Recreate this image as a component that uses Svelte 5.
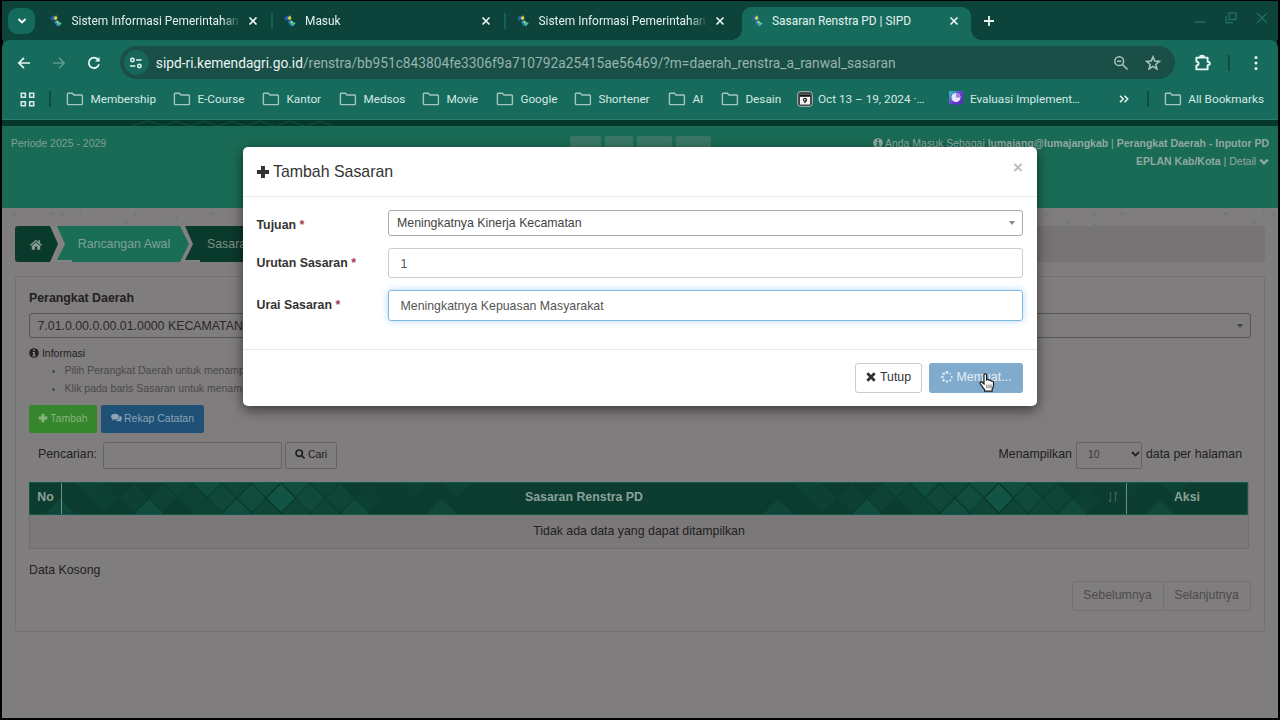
<script>
  // browser chrome
  const tabs = [
    { title: 'Sistem Informasi Pemerintahan', sep: true },
    { title: 'Masuk', sep: true },
    { title: 'Sistem Informasi Pemerintahan', sep: false },
    { title: 'Sasaran Renstra PD | SIPD', active: true }
  ]
  const host = 'sipd-ri.kemendagri.go.id'
  const path = '/renstra/bb951c843804fe3306f9a710792a25415ae56469/?m=daerah_renstra_a_ranwal_sasaran'
  const bookmarks = [
    { name: 'Membership', width: 107 },
    { name: 'E-Course', width: 89 },
    { name: 'Kantor', width: 77 },
    { name: 'Medsos', width: 83 },
    { name: 'Movie', width: 74 },
    { name: 'Google', width: 78 },
    { name: 'Shortener', width: 94 },
    { name: 'AI', width: 53 },
    { name: 'Desain', width: 76 }
  ]

  // diamonds of the table header texture: [x, y, opacity]
  const cluster = [
    [-147, 0, 0.2], [-118, 0, 0.25], [-132, 15, 0.7], [-103, -15, 0.35], [-88, 0, 0.3],
    [-74, -15, 0.7], [-74, 15, 0.25], [-59, 0, 0.5], [-44, 15, 0.75], [-44, -15, 0.4],
    [-29, 0, 0.7], [-15, 15, 0.4], [-15, -15, 0.75], [0, 0, 1], [15, -15, 0.75], [15, 15, 0.35],
    [29, 0, 0.6], [44, 15, 0.35], [44, -15, 0.35], [59, 0, 0.35], [74, 15, 0.6], [88, 0, 0.15],
    [-191, -15, 0.3], [-177, 0, 0.2], [-221, 15, 0.45], [132, -15, 0.15], [161, 15, 0.5], [176, -15, 0.3]
  ]
  const diamonds = [251, 969].flatMap((cx) => cluster.map(([x, y, o]) => [cx + x, 15 + y, o]))

  // specks of the page background that show under the header
  const specks = [[11, 5], [49, 4], [58, 5], [77, 4], [132, 5], [173, 9], [209, 4], [123, 13], [1044, 5], [1091, 5], [1119, 4], [1222, 4], [1260, 4], [1270, 5], [1064, 14], [1091, 15], [1250, 13]]

  let tujuan = 'Meningkatnya Kinerja Kecamatan'
  let urutan = '1'
  let urai = 'Meningkatnya Kepuasan Masyarakat'
</script>

{#snippet favicon()}
  <svg class="favicon" width="14" height="14" viewBox="0 0 14 14">
    <path d="M1 4.5 4 1.5 6.5 3 3.5 7z" fill="#1f62b0" />
    <path d="M4.5 4 7.2 1.2 8.6 4.8 6 6.2z" fill="#d8cf3e" />
    <path d="M5 8 8 5.5 10.2 8.5 8 12.5z" fill="#2e80c0" />
    <path d="M8.2 7.5 12.8 9 9.5 12.4z" fill="#47c99a" />
    <path d="M7 7.6 9.8 7.2 8.6 9.6z" fill="#e4dd55" />
  </svg>
{/snippet}

{#snippet cross()}
  <svg width="10" height="10" viewBox="0 0 10 10" stroke="currentColor" stroke-width="1.6"><path d="M1.5 1.5l7 7M8.5 1.5l-7 7" /></svg>
{/snippet}

{#snippet folder()}
  <svg width="18" height="14" viewBox="0 0 18 14" fill="none" stroke="#a5c6be" stroke-width="1.4"><path d="M2.2 1.2H6.4L8 3h7.6q.8 0 .8.8v8q0 .8-.8.8H2.2q-.8 0-.8-.8V2q0-.8.8-.8z" /></svg>
{/snippet}

{#snippet plus(size)}
  <svg width={size} height={size} viewBox="0 0 12 12" fill="currentColor"><path d="M4.3.8h3.4v3.5h3.5v3.4H7.7v3.5H4.3V7.7H.8V4.3h3.5z" /></svg>
{/snippet}

{#snippet info()}
  <svg width="10" height="10" viewBox="0 0 10 10"><circle cx="5" cy="5" r="4.8" fill="currentColor" /><path class="hole" d="M4 1.4h2v1.5H4zM3.4 4H6v3.2h.8v1.2H3.3V7.2h.8V5.1h-.7z" /></svg>
{/snippet}

<div class="screen">
  <div class="tabstrip">
    <div class="tab-search">
      <svg width="10" height="8" viewBox="0 0 10 8" fill="none" stroke="#fff" stroke-width="1.8"><path d="M1.5 2 5 5.5 8.5 2" /></svg>
    </div>
    <div class="tabs">
      {#each tabs as tab}
        <div class="tab" class:active={tab.active} class:sep={tab.sep}>
          {@render favicon()}
          <span class="tab-title" class:fade={!tab.active}>{tab.title}</span>
          <span class="tab-close">{@render cross()}</span>
        </div>
      {/each}
    </div>
    <svg class="new-tab" width="12" height="12" viewBox="0 0 12 12" stroke="#e9f5f1" stroke-width="1.8"><path d="M6 1v10M1 6h10" /></svg>
    <div class="window-controls">
      <svg width="12" height="12" viewBox="0 0 12 12"><path d="M.5 10h11" /></svg>
      <svg width="12" height="12" viewBox="0 0 12 12"><path d="M4 1h7v6.5H4zM1.2 4v6.8H8" /></svg>
      <svg width="12" height="12" viewBox="0 0 12 12"><path d="M1 1l10 10M11 1 1 11" /></svg>
    </div>
  </div>

  <div class="toolbar">
    <div class="nav">
      <svg width="14" height="14" viewBox="0 0 14 14" fill="none" stroke="#e9f5f1" stroke-width="1.7"><path d="M13 7H2M7 1.8 1.8 7 7 12.2" /></svg>
      <svg width="14" height="14" viewBox="0 0 14 14" fill="none" stroke="#5e9c8f" stroke-width="1.5"><path d="M1 7h11M7 1.8 12.2 7 7 12.2" /></svg>
      <svg width="14" height="14" viewBox="0 0 14 14" fill="none" stroke="#e9f5f1" stroke-width="1.7"><path d="M12 8.2A5.2 5.2 0 1 1 11 3.6L12.2 5" /><path d="M12.5 1v4.6H8z" fill="#e9f5f1" stroke="none" /></svg>
    </div>
    <div class="omnibox">
      <span class="site-info">
        <svg width="14" height="12" viewBox="0 0 14 12" fill="none" stroke="#e9f5f1" stroke-width="1.5"><circle cx="3.4" cy="3" r="1.7" /><path d="M7.2 3h5.3M1 9h5.3" /><circle cx="10.4" cy="9" r="1.7" /></svg>
      </span>
      <span class="url"><b>{host}</b>{path}</span>
      <svg class="zoom-icon" width="16" height="16" viewBox="0 0 16 16" fill="none" stroke="#a9c7c0" stroke-width="1.5"><circle cx="6.2" cy="6.2" r="4.4" /><path d="M9.5 9.5l5 5M4.2 6.2h4" /></svg>
      <svg width="16" height="16" viewBox="0 0 16 16" fill="none" stroke="#a9c7c0" stroke-width="1.5"><path d="M8 1.800l1.700 4.300 4.600.3-3.500 3 1.100 4.500L8 11.400l-3.900 2.500 1.100-4.500-3.500-3 4.600-.3z" /></svg>
    </div>
    <svg class="puzzle" width="18" height="18" viewBox="0 0 18 18" fill="none" stroke="#e9f5f1" stroke-width="1.9" stroke-linejoin="round"><path d="M2.400 3.600h11.200v4.200q2.200 0 2.200 1.700t-2.200 1.700v4.200H2.400v-4q2.200 0 2.200-1.900T2.400 7.600z" /><path d="M6 3.200q0-1.500 2-1.500t2 1.500" /></svg>
    <i class="divider"></i>
    <svg class="menu" width="4" height="16" viewBox="0 0 4 16" fill="#e9f5f1"><circle cx="2" cy="2.5" r="1.5" /><circle cx="2" cy="8" r="1.5" /><circle cx="2" cy="13.5" r="1.5" /></svg>
  </div>

  <div class="bookmarks">
    <svg class="apps" width="15" height="15" viewBox="0 0 15 15" fill="none" stroke="#d5e8e3" stroke-width="1.6"><path d="M1.300 1.300h4v4h-4zM9.700 1.300h4v4h-4zM1.300 9.700h4v4h-4zM9.700 9.700h4v4h-4z" /></svg>
    <i class="divider"></i>
    {#each bookmarks as mark}
      <span class="mark" style="width: {mark.width}px">{@render folder()}<span>{mark.name}</span></span>
    {/each}
    <span class="mark oct">
      <svg width="16" height="16" viewBox="0 0 16 16"><rect x=".6" y=".6" width="14.8" height="14.8" rx="3" fill="#3c4643" stroke="#aab8b4" /><rect x="3" y="3.5" width="10" height="10" fill="#f4f4f4" /><path d="M3 3.5h10v2.3H3z" fill="#151515" /><circle cx="8" cy="8.8" r="1.5" fill="none" stroke="#222" stroke-width="1.2" /><path d="M9.3 9.2 7.6 12" stroke="#222" stroke-width="1.3" /></svg>
      <span>Oct 13 – 19, 2024 ·…</span>
    </span>
    <span class="mark eval">
      <svg width="16" height="16" viewBox="0 0 16 16"><defs><linearGradient id="ev" x1="0" y1="0" x2="1" y2="1"><stop offset="0" stop-color="#2bc8c4" /><stop offset=".5" stop-color="#6a3ad2" /><stop offset="1" stop-color="#4a28b0" /></linearGradient></defs><path d="M1 0h14v13h-5l-2 3-2-3H1z" fill="url(#ev)" /><circle cx="8" cy="6.5" r="4.5" fill="#ece6fb" /><path d="M8 6.5V2a4.500 4.500 0 0 1 4.400 4.500z" fill="#a17fe8" /></svg>
      <span>Evaluasi Implement…</span>
    </span>
    <svg class="more" width="10" height="8" viewBox="0 0 10 8" fill="none" stroke="#e9f5f1" stroke-width="1.5"><path d="M1 .8 4.2 4 1 7.2M5.5.8 8.7 4 5.5 7.2" /></svg>
    <i class="divider"></i>
    <span class="mark all">{@render folder()}<span>All Bookmarks</span></span>
  </div>

  <div class="page">
    <div class="band">
      <svg width="1276" height="6" fill="none" stroke="#0b4a3a" stroke-width="1.5"><path d="M130 6l16-5 16 5M160 6l14-5 14 5M188 6l14-5 14 5M216 6l14-5 14 5M244 6l14-5 14 5M274 6l14-5 14 5M304 6l14-5 14 5" /></svg>
    </div>
    <header>
      <span class="periode">Periode 2025 - 2029</span>
      <div class="top-buttons"><i></i><i></i><i></i><i></i></div>
      <div class="account">
        <div>{@render info()} Anda Masuk Sebagai <b>lumajang@lumajangkab</b> | <b>Perangkat Daerah - Inputor PD</b></div>
        <div>
          <b>EPLAN Kab/Kota</b> | Detail
          <svg width="10" height="8" viewBox="0 0 10 8" fill="none" stroke="currentColor" stroke-width="2.4"><path d="M1.2 1.6 5 5.4l3.8-3.8" /></svg>
        </div>
      </div>
    </header>
    <svg class="specks" width="1276" height="18">
      {#each specks as [x, y]}
        <rect {x} {y} width="3" height="2.5" fill="#667073" />
      {/each}
    </svg>

    <nav class="crumbs">
      <span class="crumb home">
        <svg width="12" height="11" viewBox="0 0 12 11" fill="currentColor"><path d="M6 .8 0 6l.8.9L6 2.5l5.2 4.400.8-.9-1.900-1.700V1.200H8.500v1.700zM6 3.500 1.800 7v3.700h3.100V7.600h2.200v3.100h3.100V7z" /></svg>
      </span>
      <span class="crumb current">Rancangan Awal</span>
      <span class="crumb last">Sasaran</span>
    </nav>

    <main>
      <b class="field-title">Perangkat Daerah</b>
      <div class="select2"><span>7.01.0.00.0.00.01.0000 KECAMATAN</span><i class="caret"></i></div>
      <div class="informasi">{@render info()} Informasi</div>
      <ul>
        <li>Pilih Perangkat Daerah untuk menampilkan</li>
        <li>Klik pada baris Sasaran untuk menampilkan</li>
      </ul>
      <div class="actions">
        <span class="btn green">{@render plus(10)} Tambah</span>
        <span class="btn blue">
          <svg width="11" height="10" viewBox="0 0 11 10" fill="currentColor"><path d="M4 .8C6.200.8 8 2 8 3.700S6.200 6.500 4 6.500l-.8-.1Q2.200 7.300.8 7.400q.7-.6.8-1.500Q0 5.200 0 3.700C0 2 1.800.8 4 .8z" /><path d="M8.700 2.700Q11 3.500 11 5.400q0 1.200-1.400 2 .1.900.8 1.500-1.500-.1-2.400-.9-2.600.3-4-.9 4.500 0 4.700-4.400z" /></svg>
          Rekap Catatan
        </span>
      </div>
      <div class="filter">
        <span class="pencarian">Pencarian:</span>
        <span class="search-box"></span>
        <span class="cari">
          <svg width="10" height="10" viewBox="0 0 10 10" fill="none" stroke="currentColor" stroke-width="1.7"><circle cx="4.2" cy="4.2" r="3.2" /><path d="M6.5 6.5l3 3" /></svg>
          Cari
        </span>
        <span class="spacer"></span>
        <span>Menampilkan</span>
        <span class="per-page">10
          <svg width="9" height="6" viewBox="0 0 9 6" fill="none" stroke="#222021" stroke-width="1.8"><path d="M1 1l3.500 3.500L8 1" /></svg>
        </span>
        <span>data per halaman</span>
      </div>
      <div class="table">
        <div class="thead">
          <svg class="texture" width="1218" height="31">
            {#each diamonds as [x, y, o]}
              <path d="M{x} {y - 15}l15 15-15 15-15-15z" fill="#166351" fill-opacity={o * 0.65} stroke="#0a382c" stroke-width="1.5" stroke-opacity={o} />
            {/each}
          </svg>
          <span class="no">No</span>
          <span class="sasaran">Sasaran Renstra PD
            <svg class="sort" width="10" height="12" viewBox="0 0 10 12" fill="none" stroke="#356455" stroke-width="1.3"><path d="M2.500 1v10M7.500 1v10M.8 9.200l1.700 1.800M9.200 2.800 7.500 1" /></svg>
          </span>
          <span class="aksi">Aksi</span>
        </div>
        <div class="empty">Tidak ada data yang dapat ditampilkan</div>
      </div>
      <div class="summary">Data Kosong</div>
      <div class="pager"><span>Sebelumnya</span><span>Selanjutnya</span></div>
    </main>
  </div>

  <div class="modal">
    <div class="modal-header">
      {@render plus(14)}
      <span class="modal-title">Tambah Sasaran</span>
      <span class="modal-close">×</span>
    </div>
    <div class="modal-body">
      <span class="label first">Tujuan <em>*</em></span>
      <div class="select2"><span>{tujuan}</span><i class="caret"></i></div>
      <span class="label">Urutan Sasaran <em>*</em></span>
      <div class="input">{urutan}</div>
      <span class="label">Urai Sasaran <em>*</em></span>
      <div class="input focus">{urai}</div>
    </div>
    <div class="modal-footer">
      <span class="tutup">
        <svg width="10" height="10" viewBox="0 0 10 10" stroke="currentColor" stroke-width="2.8"><path d="M1.300 1.300l7.400 7.400M8.700 1.300 1.300 8.700" /></svg>
        Tutup
      </span>
      <span class="memuat">
        <svg width="12" height="12" viewBox="0 0 12 12" fill="currentColor"><circle cx="6" cy="1.4" r="1.4" /><circle cx="9.3" cy="2.7" r=".8" /><circle cx="10.6" cy="6" r="1" /><circle cx="9.3" cy="9.3" r="1.1" /><circle cx="6" cy="10.6" r="1.2" /><circle cx="2.7" cy="9.3" r="1.2" /><circle cx="1.4" cy="6" r="1.3" /><circle cx="2.7" cy="2.7" r="1.3" /></svg>
        Memuat...
      </span>
    </div>
  </div>

  <!-- hand pointer -->
  <svg class="pointer" width="16" height="19" viewBox="0 0 16 19"><path d="M5 2.300c0-2 2.600-2 2.600 0v4.500c.8-.8 2.200-.5 2.500.5.800-.5 2-.1 2.200.8 1-.3 2.200.2 2.200 1.400v3.300c0 1.200-1 2.300-1.400 3.500v1.900H5.600v-1.500C4.300 15 2.700 12.900 1.300 10.900.4 9.400 2 8.300 3.300 9.500L5 11z" fill="#fff" stroke="#1c1c1c" stroke-width="1.2" /><path d="M7.800 11.500v3.800M10 11.500v3.800M12 11.500v3.800" stroke="#444" stroke-width=".8" /></svg>
</div>

<style>
  :global(body) {
    background: #000;
    overflow: hidden;
  }
  * {
    box-sizing: border-box;
  }
  svg {
    flex: none;
    display: block;
  }
  .screen {
    position: relative;
    width: 1280px;
    height: 720px;
    padding: 1px 2px 2px;
    background: #000;
    overflow: hidden;
    font: 12.35px/18px 'Liberation Sans', Arial, sans-serif;
    white-space: nowrap;
  }

  /* browser chrome */
  .tabstrip {
    display: flex;
    height: 39px;
    padding-left: 6px;
    background: #0c433b;
    font: 11.9px/18px Roboto, sans-serif;
    color: #e4f1ed;
  }
  .tab-search {
    display: flex;
    align-items: center;
    justify-content: center;
    width: 27px;
    height: 26px;
    margin-top: 7px;
    border-radius: 9px;
    background: #146a5b;
  }
  .tabs {
    display: flex;
    margin-left: 6px;
  }
  .tab {
    position: relative;
    display: flex;
    align-items: center;
    width: 233.5px;
    height: 39px;
    padding: 0 17px 0 8px;
  }
  .tab.sep::after {
    content: '';
    position: absolute;
    right: 2px;
    top: 12px;
    width: 2px;
    height: 16px;
    background: #176152;
  }
  .tab.active {
    width: 229px;
    height: 33px;
    margin-top: 6px;
    padding: 0 12px 6px 8px;
    border-radius: 9px 9px 0 0;
    background: #166b5d;
  }
  .tab.active::before,
  .tab.active::after {
    content: '';
    position: absolute;
    bottom: 0;
    width: 10px;
    height: 10px;
  }
  .tab.active::before {
    left: -10px;
    background: radial-gradient(circle at 0 0, transparent 9.5px, #166b5d 10px);
  }
  .tab.active::after {
    right: -10px;
    background: radial-gradient(circle at 100% 0, transparent 9.5px, #166b5d 10px);
  }
  .tab-title {
    flex: 1;
    margin: 0 8px 0 8.5px;
  }
  .tab-title.fade {
    mask-image: linear-gradient(90deg, #000 150px, transparent 169px);
  }
  .tab-close {
    color: #f2faf7;
  }
  .new-tab {
    margin: 14px 0 0 12px;
  }
  .window-controls {
    display: flex;
    gap: 19px;
    margin: 11px 10px 0 auto;
    fill: none;
    stroke: #1f6e5e;
    stroke-width: 1.4;
  }
  .toolbar {
    display: flex;
    align-items: center;
    height: 44px;
    padding: 1px 20px 0 15px;
    border-radius: 8px 8px 0 0;
    background: #166b5d;
    box-shadow: 0 -10px 0 -1px #0c433b;
  }
  .nav {
    display: flex;
    gap: 21px;
    width: 103px;
  }
  .omnibox {
    display: flex;
    align-items: center;
    width: 1057px;
    height: 33px;
    padding: 0 14px 0 4px;
    border-radius: 17px;
    background: #194f47;
    font: 13.74px/20px Roboto, sans-serif;
    color: #95b5ae;
  }
  .site-info {
    display: flex;
    align-items: center;
    justify-content: center;
    width: 25px;
    height: 25px;
    border-radius: 50%;
    background: #16665a;
  }
  .url {
    flex: 1;
    margin-left: 7px;
  }
  .url b {
    font-weight: 400;
    color: #eaf4f1;
  }
  .zoom-icon {
    margin-right: 16px;
  }
  .puzzle {
    margin-left: 19px;
  }
  .divider {
    width: 2px;
    height: 16px;
    background: #0d4f43;
  }
  .toolbar .divider {
    margin-left: 16px;
  }
  .menu {
    margin-left: 24px;
  }
  .bookmarks {
    display: flex;
    align-items: center;
    height: 36px;
    padding: 0 14px 5px 18px;
    background: #166b5d;
    border-bottom: 1px solid #2c7a68;
    font: 11.75px/18px Roboto, sans-serif;
    color: #d5e8e3;
  }
  .bookmarks .divider {
    margin: 0 15px 0 14px;
  }
  .mark {
    display: flex;
    align-items: center;
    gap: 6.5px;
    flex: none;
  }
  .oct {
    gap: 5px;
    width: 151px;
  }
  .eval {
    gap: 6px;
    width: 171px;
  }
  .bookmarks .more + .divider {
    margin-left: 18px;
  }
  .all {
    margin-left: auto;
  }

  /* dimmed page behind the dialog */
  .page {
    height: 598px;
    background: #807d7e;
    color: #222021;
  }
  .band {
    height: 6px;
    background: #05382b;
  }
  .page header {
    display: flex;
    justify-content: space-between;
    height: 82px;
    padding: 8px 9px 0;
    background: #1a6b55;
    font-size: 10.5px;
    color: #7fa096;
  }
  .periode {
    width: 559px;
  }
  .top-buttons {
    display: flex;
    gap: 4px;
    margin-top: 2px;
  }
  .top-buttons i {
    width: 31px;
    height: 20px;
    border-radius: 2px;
    background: #3a7767;
  }
  .top-buttons i:nth-child(2) {
    width: 28px;
  }
  .top-buttons i:nth-child(n + 3) {
    width: 35px;
  }
  .account {
    flex: 1;
    display: flex;
    flex-direction: column;
    align-items: flex-end;
    color: #91a9a2;
  }
  .account div {
    height: 18px;
  }
  .account svg,
  .informasi svg {
    display: inline-block;
    vertical-align: -1px;
  }
  .account :global(.hole) {
    fill: #1a6b55;
  }
  .specks {
    opacity: 0.5;
  }
  .crumbs {
    display: flex;
    height: 36px;
    margin: 0 13px;
    border-radius: 3px;
    background: linear-gradient(90deg, #848182 225px, #767374 0);
    color: #7fa096;
  }
  .crumb {
    display: flex;
    align-items: center;
    justify-content: center;
    height: 36px;
  }
  .home {
    width: 43px;
    padding-right: 1px;
    border-radius: 3px 0 0 3px;
    background: #0a3a2c;
    color: #8c9b96;
    clip-path: polygon(0 0, 35px 0, 43px 50%, 35px 100%, 0 100%);
  }
  .current {
    width: 132px;
    margin-left: -1px;
    padding-left: 2px;
    background: #1a6e56;
    clip-path: polygon(0 0, 123px 0, 132px 50%, 123px 100%, 15px 100%, 15px 34px, 0 34px, 8px 50%);
  }
  .last {
    width: 90px;
    margin-left: -4px;
    background: #0a3a2c;
    color: #7c8f89;
    clip-path: polygon(0 0, 82px 0, 90px 50%, 82px 100%, 15px 100%, 15px 34px, 0 34px, 8px 50%);
  }
  main {
    height: 356px;
    margin: 14px 13px 0;
    padding: 12px 13px 0;
    border: 1px solid #747172;
    border-radius: 3px;
  }
  .field-title {
    display: block;
    height: 24px;
  }
  .select2 {
    display: flex;
    align-items: center;
    justify-content: space-between;
    height: 25px;
    padding: 0 7px 0 8px;
    border: 1px solid #575556;
    border-radius: 3px;
  }
  main .select2 {
    width: 1222px;
    padding-left: 7.5px;
    color: #2a2829;
  }
  .caret {
    border: 3px solid transparent;
    border-top: 4px solid #444;
    border-bottom: 0;
  }
  .informasi {
    height: 17px;
    margin-top: 6px;
    font-size: 10.5px;
  }
  .informasi :global(.hole) {
    fill: #807d7e;
  }
  ul {
    margin: 0;
    padding: 0 0 0 35.5px;
    font-size: 10.5px;
    color: #4a4849;
  }
  .actions {
    display: flex;
    gap: 4px;
    margin-top: 8px;
  }
  .btn {
    display: flex;
    align-items: center;
    justify-content: center;
    gap: 2px;
    height: 28px;
    padding-bottom: 2px;
    border-radius: 2px;
    font-size: 10.5px;
  }
  .green {
    width: 68px;
    background: #35862c;
    color: #86b37f;
  }
  .blue {
    width: 103px;
    background: #1f5075;
    color: #8ba4b7;
  }
  .filter {
    display: flex;
    align-items: center;
    height: 28px;
    margin-top: 8px;
    padding: 0 9px;
  }
  .filter > span {
    padding-bottom: 2px;
  }
  .search-box {
    width: 179px;
    height: 27px;
    margin: 0 3px 0 6px;
    border: 1px solid #646263;
    border-radius: 2px;
  }
  .cari {
    display: flex;
    align-items: center;
    justify-content: center;
    gap: 3px;
    width: 52px;
    height: 27px;
    border: 1px solid #646263;
    border-radius: 2px;
    font-size: 10.5px;
  }
  .spacer {
    flex: 1;
  }
  .per-page {
    display: flex;
    align-items: center;
    justify-content: space-between;
    width: 66px;
    height: 27px;
    margin: 0 4px;
    padding: 0 1px 0 11px;
    border: 1px solid #646263;
    border-radius: 2px;
    font-size: 10.5px;
    color: #39373a;
  }
  .table {
    width: 1220px;
    margin-top: 13px;
    border: 1px solid #6f6d6e;
    border-top: 0;
  }
  .thead {
    position: relative;
    display: flex;
    height: 33px;
    margin-left: -1px;
    align-items: center;
    text-align: center;
    border: 1px solid #0f5b48;
    background: #0c3c2f;
    color: #8aa199;
    font-weight: 700;
    overflow: hidden;
  }
  .texture {
    position: absolute;
    left: 0;
    top: 0;
  }
  .thead span {
    position: relative;
    height: 31px;
    line-height: 29px;
  }
  .no {
    width: 32px;
    border-right: 1px solid #7a8c86;
  }
  .sasaran {
    width: 1065px;
    padding-right: 20px;
    border-right: 1px solid #7a8c86;
  }
  .sort {
    position: absolute;
    right: 8px;
    top: 8px;
  }
  .aksi {
    flex: 1;
  }
  .empty {
    height: 33px;
    line-height: 33px;
    background: #7b7879;
    text-align: center;
  }
  .summary {
    height: 18px;
    margin-top: 12px;
  }
  .pager {
    display: flex;
    justify-content: flex-end;
    margin-top: 2px;
    color: #4c4a4b;
  }
  .pager span {
    width: 92px;
    height: 30px;
    line-height: 27px;
    padding-right: 1px;
    text-align: center;
    border: 1px solid #737071;
    border-radius: 3px 0 0 3px;
  }
  .pager span + span {
    width: 88px;
    margin-left: -1px;
    border-radius: 0 3px 3px 0;
  }

  /* dialog */
  .modal {
    position: absolute;
    left: 243px;
    top: 147px;
    width: 794px;
    height: 259px;
    border-radius: 5px;
    background: #fff;
    box-shadow: 0 4px 13px rgba(0, 0, 0, 0.55);
    color: #333;
  }
  .modal-header {
    display: flex;
    align-items: center;
    height: 50px;
    padding: 0 14px 0 12.5px;
    border-bottom: 1px solid #e8e8e8;
    font-size: 15.9px;
  }
  .modal-title {
    flex: 1;
    margin-left: 3.5px;
  }
  .modal-close {
    height: 30px;
    line-height: 28px;
    color: #bdbdbd;
    font-size: 17px;
    font-weight: 700;
    padding-bottom: 2px;
    margin: -6px 0 0;
  }
  .modal-body {
    display: grid;
    grid-template-columns: 132px 635px;
    grid-template-rows: 26px 30px 31px;
    row-gap: 12px;
    align-items: center;
    height: 152px;
    padding: 13px;
  }
  .modal-body .select2 {
    height: 26px;
    border-color: #aaa;
    color: #444;
  }
  .modal-body .caret {
    border-top-color: #888;
  }
  .label {
    padding: 0 0 1px 0.5px;
    font-weight: 700;
  }
  .label.first {
    padding-top: 4px;
  }
  .label em {
    font-style: normal;
    color: #a5404a;
  }
  .input {
    height: 30px;
    padding-left: 11.5px;
    border: 1px solid #ccc;
    border-radius: 3px;
    line-height: 30px;
    color: #555;
  }
  .focus {
    height: 31px;
    line-height: 31px;
    border-color: #7fb8e0;
    box-shadow: 0 0 6px rgba(102, 175, 233, 0.5);
  }
  .modal-footer {
    display: flex;
    justify-content: flex-end;
    gap: 7px;
    height: 57px;
    padding: 13px 14px 0;
    border-top: 1px solid #e8e8e8;
  }
  .modal-footer span {
    display: flex;
    align-items: center;
    justify-content: center;
    gap: 3px;
    height: 30px;
    padding-bottom: 2px;
    border-radius: 3px;
  }
  .modal-footer .tutup {
    width: 67px;
    gap: 4px;
    border: 1px solid #ccc;
  }
  .modal-footer .memuat {
    width: 94px;
    gap: 4px;
    background: #81abcd;
    color: #e3edf5;
  }
  .pointer {
    position: absolute;
    left: 979px;
    top: 373px;
  }
</style>
